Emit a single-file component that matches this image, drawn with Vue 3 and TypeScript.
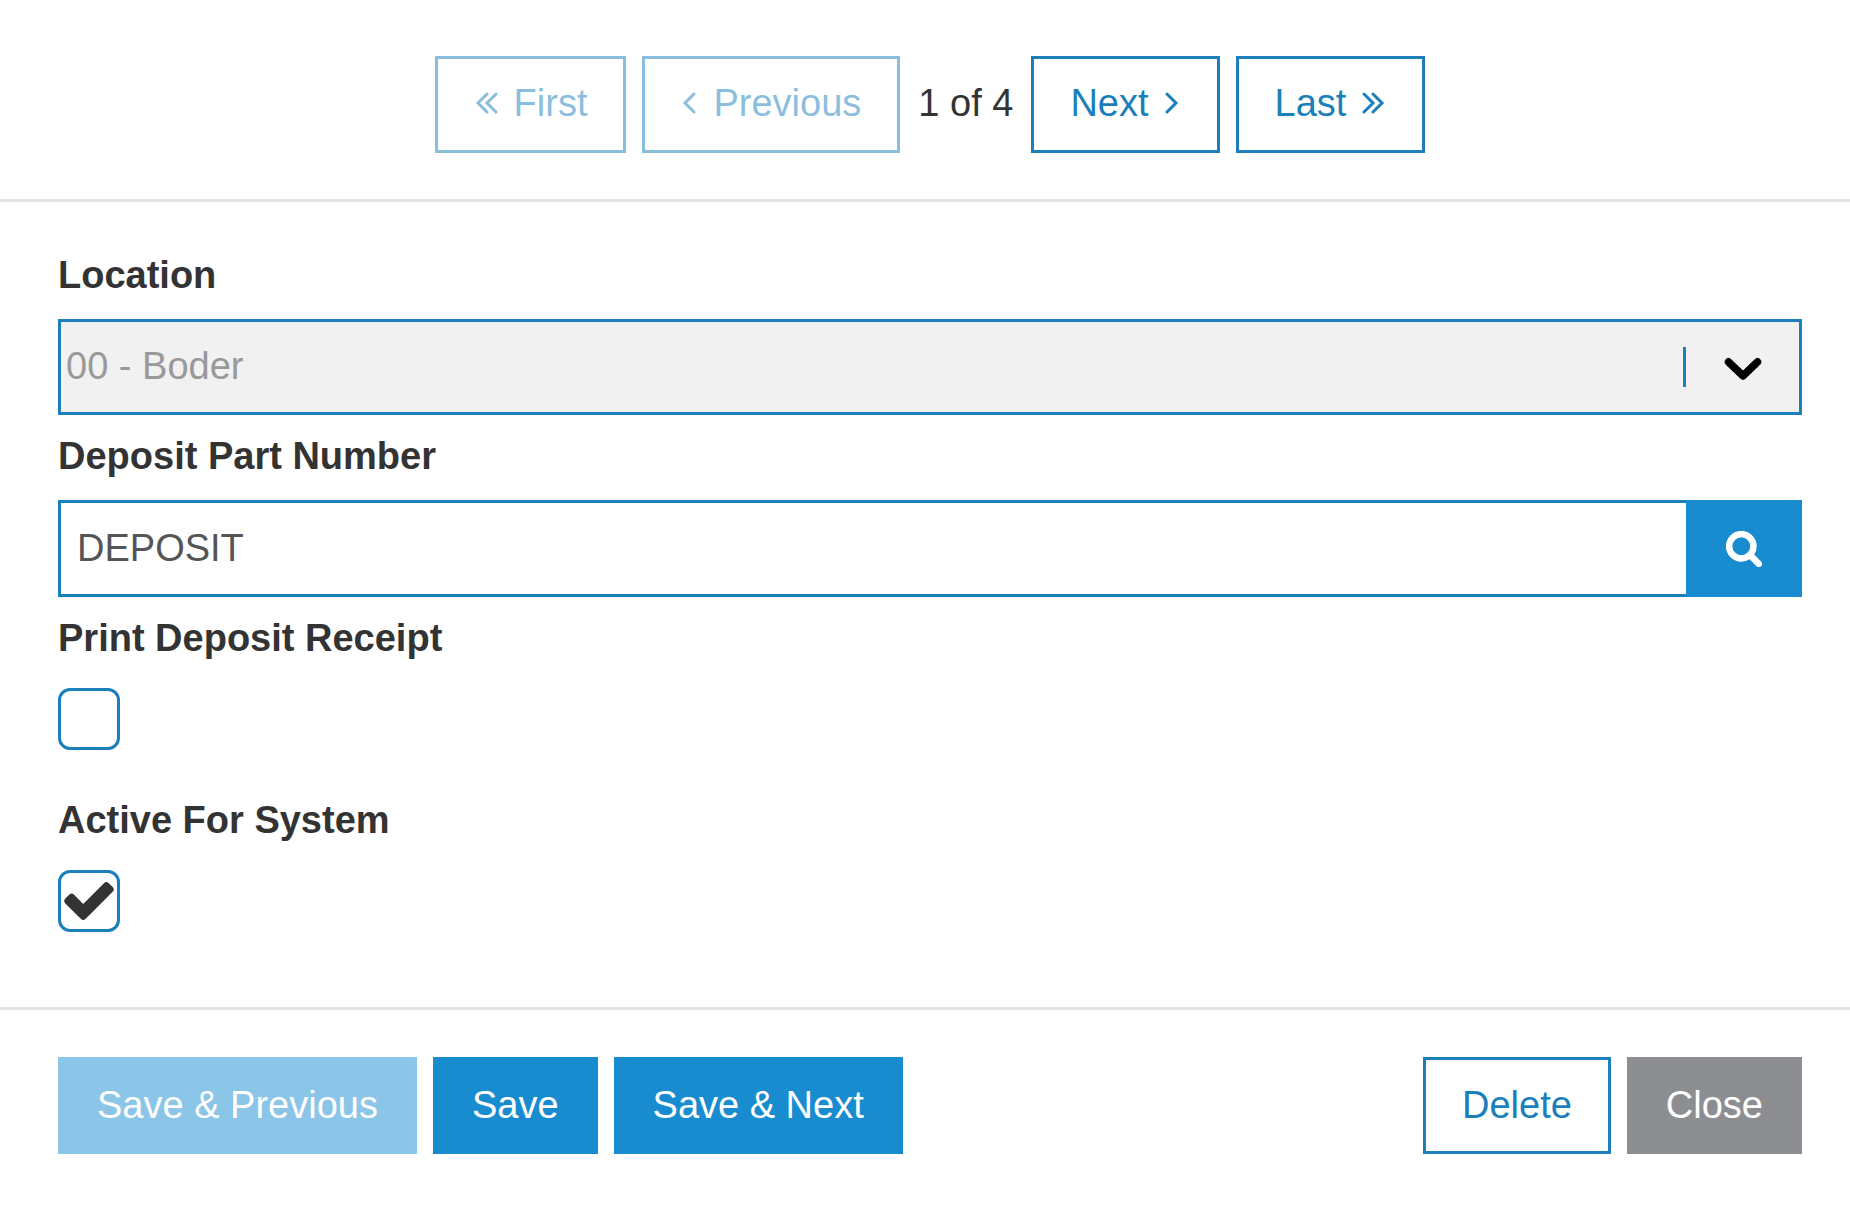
<script setup lang="ts">
import { ref } from 'vue'

const page = ref(1)
const pageCount = 4
const location = ref('00')
const partNumber = ref('DEPOSIT')
const printReceipt = ref(false)
const activeForSystem = ref(true)
</script>

<template>
  <main class="dialog">
    <nav class="pager" aria-label="Records">
      <button type="button" class="btn outline" :disabled="page === 1" @click="page = 1">
        <svg class="angle" width="24" height="22" viewBox="0 0 24 22" aria-hidden="true">
          <path d="M13 2 4 11l9 9M22 2l-9 9 9 9" />
        </svg>
        First
      </button>
      <button type="button" class="btn outline" :disabled="page === 1" @click="page--">
        <svg class="angle" width="16" height="22" viewBox="0 0 16 22" aria-hidden="true">
          <path d="M13 2 4 11l9 9" />
        </svg>
        Previous
      </button>
      <span class="count">{{ page }} of {{ pageCount }}</span>
      <button type="button" class="btn outline" :disabled="page === pageCount" @click="page++">
        Next
        <svg class="angle" width="16" height="22" viewBox="0 0 16 22" aria-hidden="true">
          <path d="M2 2l9 9-9 9" />
        </svg>
      </button>
      <button type="button" class="btn outline" :disabled="page === pageCount" @click="page = pageCount">
        Last
        <svg class="angle" width="24" height="22" viewBox="0 0 24 22" aria-hidden="true">
          <path d="M2 2l9 9-9 9M11 2l9 9-9 9" />
        </svg>
      </button>
    </nav>

    <form class="fields" @submit.prevent>
      <div class="field">
        <label for="location">Location</label>
        <div class="select-box">
          <select id="location" v-model="location" disabled>
            <option value="00">00 - Boder</option>
          </select>
          <span class="indicator" aria-hidden="true">
            <svg width="62" height="62" viewBox="0 0 20 20">
              <path stroke="#000" stroke-width="0.3" d="M4.516 7.548c0.436-0.446 1.043-0.481 1.576 0l3.908 3.747 3.908-3.747c0.533-0.481 1.141-0.446 1.574 0 0.436 0.445 0.408 1.197 0 1.615-0.406 0.418-4.695 4.502-4.695 4.502-0.217 0.223-0.502 0.335-0.787 0.335s-0.57-0.112-0.789-0.335c0 0-4.287-4.084-4.695-4.502s-0.436-1.17 0-1.615z" />
            </svg>
          </span>
        </div>
      </div>

      <div class="field">
        <label for="part">Deposit Part Number</label>
        <div class="input-group">
          <input id="part" v-model="partNumber" type="text" />
          <button type="button" class="search" aria-label="Search">
            <svg width="36" height="36" viewBox="44 108 1704 1704" aria-hidden="true">
              <path fill="currentColor" stroke="currentColor" stroke-width="50" d="M1216 832q0-185-131.5-316.5t-316.5-131.5-316.5 131.5-131.5 316.5 131.5 316.5 316.5 131.5 316.5-131.5 131.5-316.5zm512 832q0 52-38 90t-90 38q-54 0-90-38l-343-342q-179 124-399 124-143 0-273.5-55.5t-225-150-150-225-55.5-273.5 55.5-273.5 150-225 225-150 273.5-55.5 273.5 55.5 225 150 150 225 55.5 273.5q0 220-124 399l343 343q37 37 37 90z" />
            </svg>
          </button>
        </div>
      </div>

      <div class="field">
        <label for="print">Print Deposit Receipt</label>
        <div class="check">
          <input id="print" v-model="printReceipt" type="checkbox" />
          <svg class="tick" width="50" height="38" viewBox="121 334 1550 1188" aria-hidden="true">
            <path d="M1671 566q0 40-28 68l-724 724-136 136q-28 28-68 28t-68-28l-136-136-362-362q-28-28-28-68t28-68l136-136q28-28 68-28t68 28l294 295 656-657q28-28 68-28t68 28l136 136q28 28 28 68z" />
          </svg>
        </div>
      </div>

      <div class="field">
        <label for="active">Active For System</label>
        <div class="check">
          <input id="active" v-model="activeForSystem" type="checkbox" />
          <svg class="tick" width="50" height="38" viewBox="121 334 1550 1188" aria-hidden="true">
            <path d="M1671 566q0 40-28 68l-724 724-136 136q-28 28-68 28t-68-28l-136-136-362-362q-28-28-28-68t28-68l136-136q28-28 68-28t68 28l294 295 656-657q28-28 68-28t68 28l136 136q28 28 28 68z" />
          </svg>
        </div>
      </div>
    </form>

    <footer class="actions">
      <button type="button" class="btn solid" :disabled="page === 1">Save &amp; Previous</button>
      <button type="button" class="btn solid">Save</button>
      <button type="button" class="btn solid">Save &amp; Next</button>
      <span class="spacer"></span>
      <button type="button" class="btn outline">Delete</button>
      <button type="button" class="btn muted">Close</button>
    </footer>
  </main>
</template>

<style>
body {
  background: #fff;
}
</style>

<style scoped>
.dialog {
  --line: #1a7fba;
  --fill: #198cd0;
  color: #333;
  font: 38px/44px 'Liberation Sans', Arial, sans-serif;
}

.dialog *,
.dialog {
  box-sizing: border-box;
}

button,
input,
select {
  margin: 0;
  border-radius: 0;
  font: inherit;
}

.pager {
  display: flex;
  justify-content: center;
  align-items: center;
  gap: 16px;
  padding: 56px 48px 46px 58px;
  border-bottom: 3px solid #e5e5e5;
}

.btn {
  display: inline-flex;
  align-items: center;
  gap: 16px;
  padding: 23px 36px 24px;
  border: 3px solid;
  white-space: nowrap;
}

.pager .btn {
  padding-top: 22px;
  padding-bottom: 25px;
}

.btn:disabled {
  opacity: 0.5;
}

.outline {
  border-color: var(--line);
  background: #fff;
  color: var(--line);
}

.solid {
  border-color: var(--fill);
  background: var(--fill);
  color: #fff;
}

.muted {
  border-color: #8d8e92;
  background: #8d8e92;
  color: #fff;
}

.angle {
  fill: none;
  stroke: currentColor;
  stroke-width: 3;
  stroke-linecap: round;
}

.count {
  margin: 0 2px;
  padding-bottom: 3px;
}

.fields {
  display: flex;
  flex-direction: column;
  gap: 19px;
  padding: 51px 48px 46px 58px;
}

.field {
  display: flex;
  flex-direction: column;
  gap: 22px;
}

label {
  align-self: flex-start;
  font-weight: bold;
}

.select-box {
  position: relative;
  display: flex;
}

select {
  flex: 1;
  height: 96px;
  padding: 22px 122px 24px 5px;
  border: 3px solid var(--line);
  background: #f1f1f1;
  color: #999;
  opacity: 1;
  appearance: none;
}

.indicator {
  position: absolute;
  top: 28px;
  right: 0;
  display: flex;
  justify-content: center;
  align-items: center;
  width: 119px;
  height: 40px;
  padding-right: 3px;
  border-left: 3px solid var(--line);
  pointer-events: none;
}

.input-group {
  display: flex;
}

.input-group input {
  flex: 1;
  min-width: 0;
  height: 97px;
  padding: 23px 16px 24px;
  border: 3px solid var(--line);
  border-right: 0;
  background: #fff;
  color: #555;
}

.search {
  display: flex;
  justify-content: center;
  align-items: center;
  width: 116px;
  padding: 0;
  border: 0;
  background: var(--fill);
  color: #fff;
}

.check {
  display: grid;
  justify-content: start;
  align-content: start;
  height: 97px;
  padding-top: 6px;
}

.check > * {
  grid-area: 1 / 1;
  place-self: center;
}

.check input {
  width: 62px;
  height: 62px;
  border: 3px solid var(--line);
  border-radius: 12px;
  background: #fff;
  appearance: none;
}

.tick {
  visibility: hidden;
  fill: #333;
  pointer-events: none;
}

input:checked + .tick {
  visibility: visible;
}

.actions {
  display: flex;
  gap: 16px;
  padding: 47px 48px 52px 58px;
  border-top: 3px solid #e5e5e5;
}

.spacer {
  flex: 1;
}
</style>
